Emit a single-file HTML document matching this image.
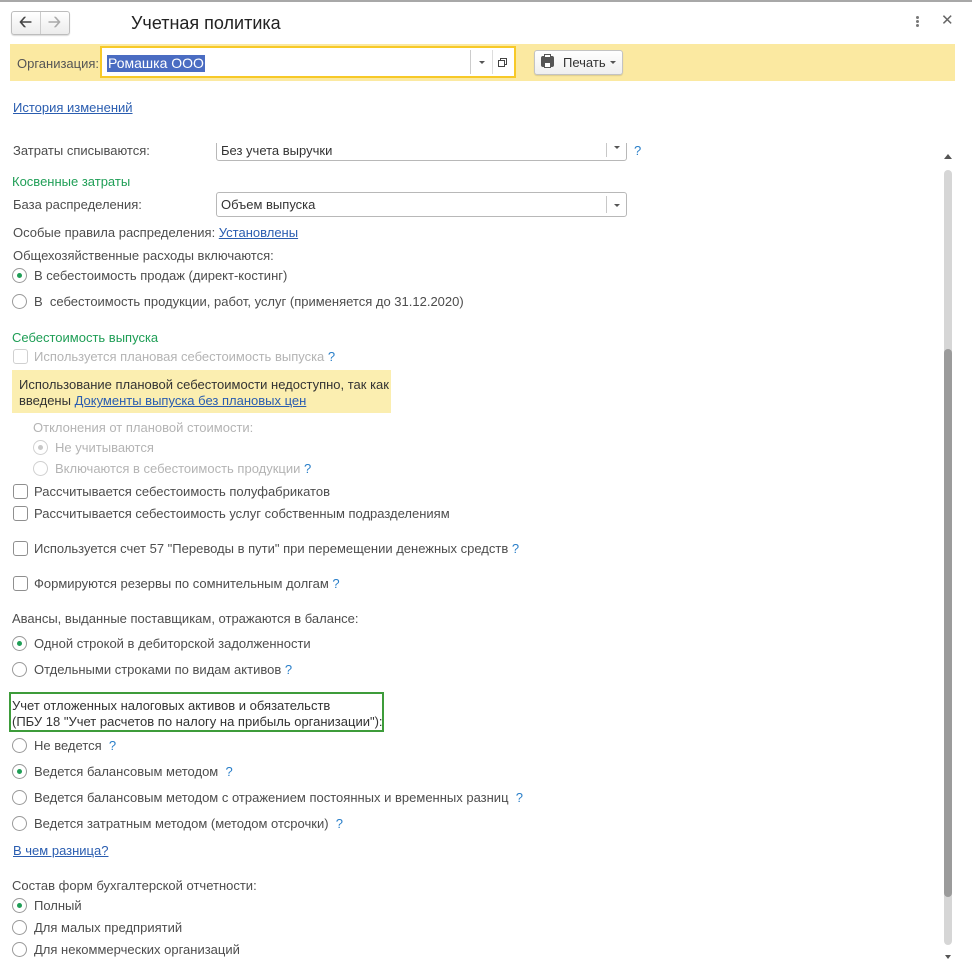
<!DOCTYPE html>
<html><head><meta charset="utf-8"><style>
*{box-sizing:border-box;margin:0;padding:0}
body{width:972px;height:977px;background:#fff;position:relative;overflow:hidden;font-family:"Liberation Sans",Arial,sans-serif;font-size:13px;color:#4d4d4d}
.a{position:absolute;white-space:nowrap;line-height:16px;margin-top:1px}
.g{color:#1f9e56}
.lk{color:#2a5db0;text-decoration:underline}
.q{color:#2a7fc9}
.d{color:#b4b4b4}
.r{position:absolute;width:15px;height:15px;border:1px solid #9a9a9a;border-radius:50%;background:#fff}
.r.on::after{content:"";position:absolute;left:4px;top:4px;width:5px;height:5px;border-radius:50%;background:#1f9e56}
.r.dis{border-color:#d0d0d0}
.r.dis.on::after{background:#c8c8c8}
.c{position:absolute;width:15px;height:15px;border:1px solid #8f8f8f;border-radius:3px;background:#fff}
.c.dis{border-color:#d0d0d0}
.sel{position:absolute;border:1px solid #b8b8b8;border-radius:3px;background:#fff}
.sel .dd{position:absolute;right:0;top:3px;bottom:3px;width:20px;border-left:1px solid #c8c8c8}
.sel .dd::after{content:"";position:absolute;left:7px;top:50%;margin-top:-1px;border-left:3px solid transparent;border-right:3px solid transparent;border-top:3px solid #555}
.dot{position:absolute;width:3px;height:3px;border-radius:50%;background:#777}
</style></head><body>
<div style="position:absolute;left:0;top:0;width:972px;height:2px;background:#a8a8a8"></div>
<!-- nav -->
<div style="position:absolute;left:11px;top:11px;width:59px;height:24px;border:1px solid #bdbdbd;border-radius:3px;background:linear-gradient(#fff,#ececec);box-shadow:0 1px 1px rgba(0,0,0,.15)"></div>
<div style="position:absolute;left:40px;top:12px;width:1px;height:22px;background:#ccc"></div>
<div class="a" style="left:19px;top:12px;font-size:16px;font-weight:bold;color:#444;line-height:20px">&#129120;</div>
<div class="a" style="left:48px;top:12px;font-size:16px;font-weight:bold;color:#aaa;line-height:20px">&#129122;</div>
<div class="a" style="left:131px;top:11px;font-size:18px;color:#222;line-height:22px">Учетная политика</div>
<div class="dot" style="left:916px;top:16px"></div>
<div class="dot" style="left:916px;top:20px"></div>
<div class="dot" style="left:916px;top:24px"></div>
<div class="a" style="left:941px;top:12px;font-size:15px;color:#666">✕</div>
<!-- yellow band -->
<div style="position:absolute;left:10px;top:44px;width:945px;height:37px;background:#fbe9a1"></div>
<div class="a" style="left:17px;top:55px;color:#555">Организация:</div>
<div style="position:absolute;left:100px;top:46px;width:416px;height:32px;border:2px solid #f7c928;background:#fff"></div>
<div style="position:absolute;left:470px;top:50px;width:1px;height:24px;background:#ccc"></div>
<div style="position:absolute;left:492px;top:50px;width:1px;height:24px;background:#ddd"></div>
<div style="position:absolute;left:479px;top:61px;border-left:3px solid transparent;border-right:3px solid transparent;border-top:3px solid #555"></div>
<div style="position:absolute;left:500px;top:58px;width:7px;height:7px;border:1px solid #444;background:#fff"></div>
<div style="position:absolute;left:498px;top:60px;width:7px;height:7px;border:1px solid #444;background:#fff"></div>
<div class="a" style="left:107px;top:54px;background:#4a6cc2;color:#fff;padding:0 1px;font-size:14px;line-height:17px">Ромашка ООО</div>
<div style="position:absolute;left:534px;top:50px;width:89px;height:25px;border:1px solid #c3c3c3;border-radius:3px;background:linear-gradient(#fff,#efefef);box-shadow:0 1px 1px rgba(0,0,0,.12)"></div>
<div style="position:absolute;left:541px;top:56px;width:13px;height:11px;border-radius:2px;background:#555"></div>
<div style="position:absolute;left:544px;top:54px;width:7px;height:4px;background:#fff;border:1px solid #555"></div>
<div style="position:absolute;left:544px;top:62px;width:7px;height:6px;background:#fff;border:1px solid #555"></div>
<div class="a" style="left:563px;top:54px;color:#333">Печать</div>
<div style="position:absolute;left:610px;top:61px;border-left:3px solid transparent;border-right:3px solid transparent;border-top:3px solid #555"></div>

<div class="a lk" style="left:13px;top:99px">История изменений</div>

<!-- scroll content -->
<div style="position:absolute;left:0;top:143px;width:940px;height:834px;overflow:hidden">
<div style="position:absolute;left:0;top:-143px;width:940px;height:1000px">
<div class="a" style="left:13px;top:142px">Затраты списываются:</div>
<div class="sel" style="left:216px;top:132px;width:411px;height:29px"><div class="dd"></div></div>
<div class="a" style="left:221px;top:142px;color:#333">Без учета выручки</div>
<div class="a q" style="left:634px;top:142px">?</div>
</div></div>
<div style="position:absolute;left:0;top:0;width:940px;height:977px">
<div class="a g" style="left:12px;top:173px">Косвенные затраты</div>
<div class="a" style="left:13px;top:196px">База распределения:</div>
<div class="sel" style="left:216px;top:192px;width:411px;height:25px"><div class="dd"></div></div>
<div class="a" style="left:221px;top:196px;color:#333">Объем выпуска</div>
<div class="a" style="left:13px;top:224px">Особые правила распределения: <span class="lk">Установлены</span></div>
<div class="a" style="left:13px;top:247px">Общехозяйственные расходы включаются:</div>
<div class="r on" style="left:12px;top:268px"></div><div class="a" style="left:34px;top:267px">В себестоимость продаж (директ-костинг)</div>
<div class="r" style="left:12px;top:294px"></div><div class="a" style="left:34px;top:293px">В &nbsp;себестоимость продукции, работ, услуг (применяется до 31.12.2020)</div>

<div class="a g" style="left:12px;top:329px">Себестоимость выпуска</div>
<div class="c dis" style="left:13px;top:349px"></div><div class="a d" style="left:34px;top:348px">Используется плановая себестоимость выпуска <span class="q">?</span></div>
<div style="position:absolute;left:12px;top:370px;width:379px;height:43px;background:#fbeeb0"></div>
<div class="a" style="left:19px;top:376px;color:#333">Использование плановой себестоимости недоступно, так как</div>
<div class="a" style="left:19px;top:392px;color:#333">введены <span class="lk">Документы выпуска без плановых цен</span></div>
<div class="a d" style="left:33px;top:419px">Отклонения от плановой стоимости:</div>
<div class="r dis on" style="left:33px;top:440px"></div><div class="a d" style="left:55px;top:439px">Не учитываются</div>
<div class="r dis" style="left:33px;top:461px"></div><div class="a d" style="left:55px;top:460px">Включаются в себестоимость продукции <span class="q">?</span></div>
<div class="c" style="left:13px;top:484px"></div><div class="a" style="left:34px;top:483px">Рассчитывается себестоимость полуфабрикатов</div>
<div class="c" style="left:13px;top:506px"></div><div class="a" style="left:34px;top:505px">Рассчитывается себестоимость услуг собственным подразделениям</div>
<div class="c" style="left:13px;top:541px"></div><div class="a" style="left:34px;top:540px">Используется счет 57 "Переводы в пути" при перемещении денежных средств <span class="q">?</span></div>
<div class="c" style="left:13px;top:576px"></div><div class="a" style="left:34px;top:575px">Формируются резервы по сомнительным долгам <span class="q">?</span></div>
<div class="a" style="left:12px;top:610px">Авансы, выданные поставщикам, отражаются в балансе:</div>
<div class="r on" style="left:12px;top:636px"></div><div class="a" style="left:34px;top:635px">Одной строкой в дебиторской задолженности</div>
<div class="r" style="left:12px;top:662px"></div><div class="a" style="left:34px;top:661px">Отдельными строками по видам активов <span class="q">?</span></div>

<div style="position:absolute;left:9px;top:692px;width:375px;height:40px;border:2px solid #3d9c3a"></div>
<div class="a" style="left:12px;top:697px;color:#333">Учет отложенных налоговых активов и обязательств</div>
<div class="a" style="left:12px;top:713px;color:#333">(ПБУ 18 "Учет расчетов по налогу на прибыль организации"):</div>
<div class="r" style="left:12px;top:738px"></div><div class="a" style="left:34px;top:737px">Не ведется &nbsp;<span class="q">?</span></div>
<div class="r on" style="left:12px;top:764px"></div><div class="a" style="left:34px;top:763px">Ведется балансовым методом &nbsp;<span class="q">?</span></div>
<div class="r" style="left:12px;top:790px"></div><div class="a" style="left:34px;top:789px">Ведется балансовым методом с отражением постоянных и временных разниц &nbsp;<span class="q">?</span></div>
<div class="r" style="left:12px;top:816px"></div><div class="a" style="left:34px;top:815px">Ведется затратным методом (методом отсрочки) &nbsp;<span class="q">?</span></div>
<div class="a lk" style="left:13px;top:842px">В чем разница?</div>
<div class="a" style="left:12px;top:877px">Состав форм бухгалтерской отчетности:</div>
<div class="r on" style="left:12px;top:898px"></div><div class="a" style="left:34px;top:897px">Полный</div>
<div class="r" style="left:12px;top:920px"></div><div class="a" style="left:34px;top:919px">Для малых предприятий</div>
<div class="r" style="left:12px;top:942px"></div><div class="a" style="left:34px;top:941px">Для некоммерческих организаций</div>
</div>
<!-- scrollbar -->
<div style="position:absolute;left:944px;top:154px;border-left:4px solid transparent;border-right:4px solid transparent;border-bottom:5px solid #555"></div>
<div style="position:absolute;left:944px;top:170px;width:8px;height:775px;border-radius:4px;background:#d6d6d6"></div>
<div style="position:absolute;left:944px;top:349px;width:8px;height:548px;border-radius:4px;background:#9b9b9b"></div>
<div style="position:absolute;left:945px;top:955px;border-left:3px solid transparent;border-right:3px solid transparent;border-top:4px solid #555"></div>
</body></html>
